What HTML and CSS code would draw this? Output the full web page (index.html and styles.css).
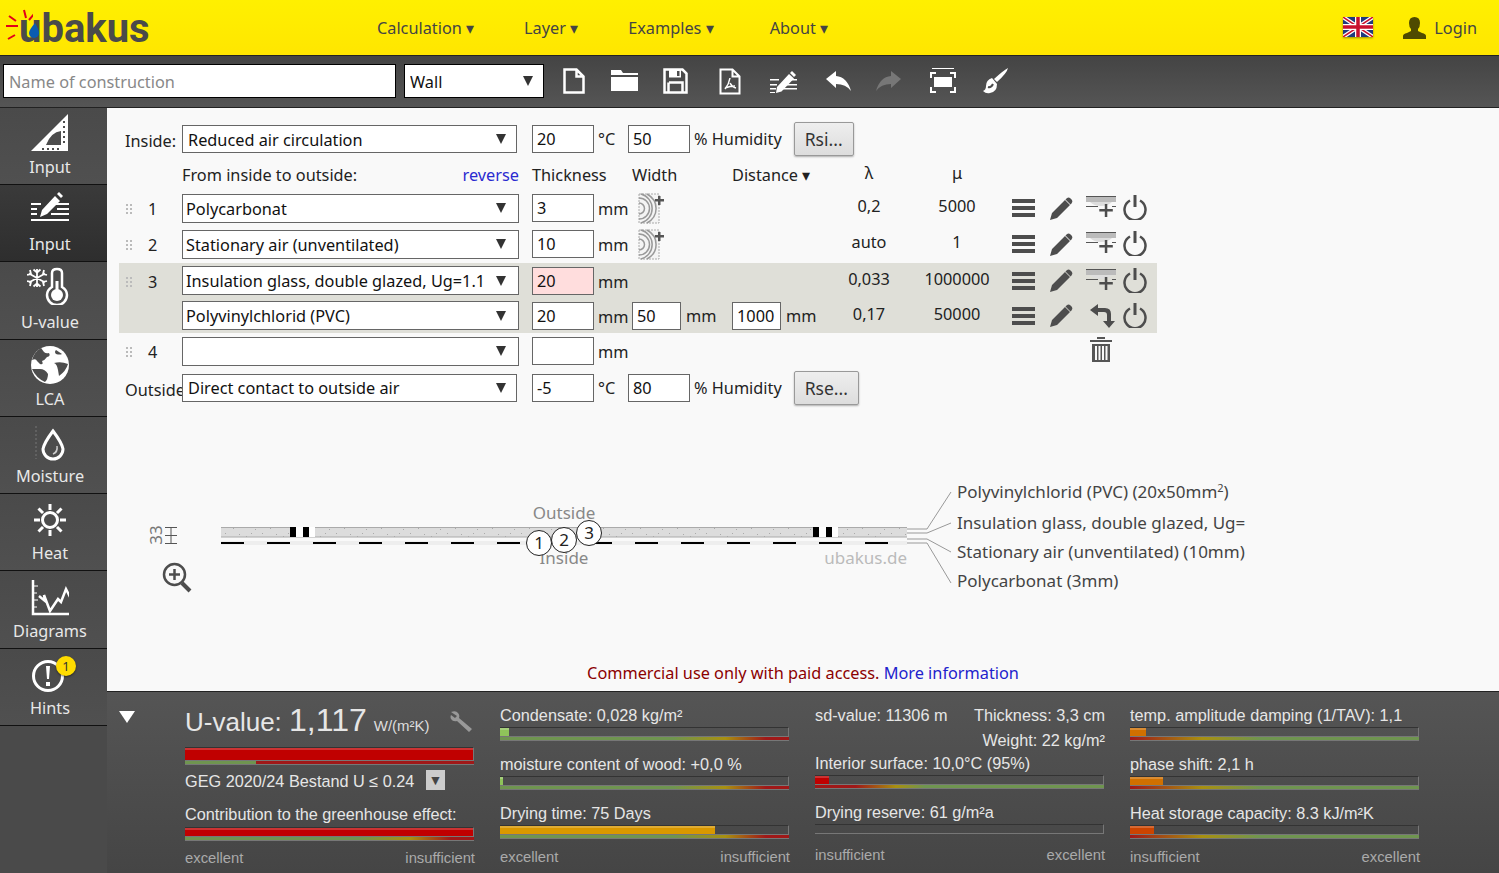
FILE: index.html
```html
<!DOCTYPE html>
<html lang="en">
<head>
    <meta charset="UTF-8">
    <meta name="viewport" content="width=device-width, initial-scale=1.0">
    <title>ubakus U-value calculator</title>
    <link rel="stylesheet" href="styles.css">
</head>
<body>
    <svg class="defs" width="0" height="0">
        <symbol id="i-menu" viewBox="0 0 23 20">
            <path d="M0 1h23v4H0zM0 8h23v4H0zM0 15h23v4H0z"/>
        </symbol>
        <symbol id="i-pencil" viewBox="0 0 23 23">
            <path d="M0 23l2-7L15 3l5 5L7 21zM16.500 1.500q2-1.500 3.500-.5l2 2q1 1.500-.5 3.500l-1 1-5-5z"/>
        </symbol>
        <symbol id="i-add" viewBox="0 0 30 24">
            <path d="M0 0h30v1H0z" fill="#555"/>
            <path d="M0 1h30v5H0z" fill="#bbb"/>
            <path d="M4 6h22q-4 4-11 4T4 6z" fill="#ddd"/>
            <path d="M0 10h12v1H0zM26 10h4v1h-4z" fill="#555"/>
            <path d="M18.800 8h2.500v5h5.500v2.500h-5.500V21h-2.500v-5.500h-5.500V13h5.500z"/>
        </symbol>
        <symbol id="i-power" viewBox="0 0 24 26">
            <path d="M7 6.500a10.500 10.500 0 1 0 10 0" fill="none" stroke="#4d4d4d" stroke-width="2.500"/>
            <path d="M10.500 1h3v12h-3z"/>
        </symbol>
        <symbol id="i-wood" viewBox="0 0 26 31">
            <path d="M1 1h20v29H1z" fill="#f4f4f4" stroke="#aaa" stroke-dasharray="2 1"/>
            <path d="M1 10a5.500 5.500 0 0 1 0 11M1 5a10.500 10.500 0 0 1 0 21M3 1a15 15 0 0 1 0 29M9 1a19 17 0 0 1 0 29" fill="none" stroke="#999" stroke-width="1.500"/>
            <path d="M20 3h2.500v3H26v2.500h-3.500V12H20V8.500h-3V6h3z" fill="#555"/>
        </symbol>
    </svg>

    <header class="topbar">
        <a class="logo">
            <svg class="logo-sun" width="28" height="36" viewBox="0 0 28 36">
                <path d="M19 1l2 8M29 5l-5 6M1 17h12M4 7l7 5M3 30l7-4" fill="none" stroke="#e2001a" stroke-width="2"/>
            </svg>
            <span class="logo-text">ubakus</span>
            <svg class="logo-drop" width="10" height="15" viewBox="0 0 10 15">
                <path d="M6 0q4 7 4 10a5 5 0 0 1-10 0q0-3 6-10z" fill="#0a5cb0"/>
            </svg>
        </a>
        <nav class="nav">
            <a>Calculation ▾</a>
            <a>Layer ▾</a>
            <a>Examples ▾</a>
            <a class="nav-about">About ▾</a>
        </nav>
        <div class="account">
            <svg class="flag" width="30" height="20" viewBox="0 0 30 20">
                <rect width="30" height="20" fill="#1f3a7d"/>
                <path d="M0 0l30 20M30 0L0 20" stroke="#fff" stroke-width="4"/>
                <path d="M0 0l30 20M30 0L0 20" stroke="#c8102e" stroke-width="1.500"/>
                <path d="M15 0v20M0 10h30" stroke="#fff" stroke-width="6"/>
                <path d="M15 0v20M0 10h30" stroke="#c8102e" stroke-width="3.500"/>
            </svg>
            <svg class="person" width="23" height="22" viewBox="0 0 23 22">
                <path d="M0 22v-3q0-2 4-3l4-2v-2q-2-2-2-6 0-6 5.500-6T17 6q0 4-2 6v2l4 2q4 1 4 3v3z" fill="#4f4a00"/>
            </svg>
            <a class="login">Login</a>
        </div>
    </header>

    <div class="toolbar">
        <input class="name-input" type="text" placeholder="Name of construction">
        <div class="sel sel-type">
            <select><option>Wall</option></select>
        </div>
        <div class="tools">
            <a class="tool"><svg width="22" height="26" viewBox="0 0 22 26"><path d="M1.500 1.500h12l7 7v16h-19zM13.500 1.500v7h7" fill="none" stroke="#fff" stroke-width="2.500"/></svg></a>
            <a class="tool"><svg width="27" height="22" viewBox="0 0 27 22"><path d="M0 0h10l2 3h15v2H0zM0 7h27v14H0z" fill="#fff"/></svg></a>
            <a class="tool"><svg width="25" height="26" viewBox="0 0 25 26"><path d="M1.500 1.500h18l4 4v19h-22zM6 14.500h13.500v10M5.500 24.500v-10" fill="none" stroke="#fff" stroke-width="2.500"/><path d="M6 1.500h12v8H6z" fill="#fff"/><path d="M14 3h2.500v5H14z" fill="#4d4d4d"/></svg></a>
            <a class="tool"><svg width="22" height="27" viewBox="0 0 22 27"><path d="M1.500 1.500h12l7 7v17h-19zM13.500 1.500v7h7" fill="none" stroke="#fff" stroke-width="2"/><path d="M11 10q-1 6-5 11M11 15q2 4 6 5M6 20q5-2 10-2" fill="none" stroke="#fff" stroke-width="1.500"/></svg></a>
            <a class="tool"><svg width="27" height="24" viewBox="0 0 27 24"><path d="M0 10h9v1.500H0zM18 10h9v1.500h-9zM0 15h7v1.500H0zM17 15h10v1.500H17zM0 19h6v1.500H0zM12 19h15v1.500H12zM0 23h5v1H0z" fill="#fff"/><path d="M6 24l1-6L19 5l5 4.500-12.500 13zM20 4l2-2 4 4-2 2z" fill="#fff"/></svg></a>
            <a class="tool"><svg width="25" height="20" viewBox="0 0 25 20"><path d="M0 8l10-8v5q11 1 15 15-5-7-15-7v4z" fill="#fff"/></svg></a>
            <a class="tool"><svg width="25" height="20" viewBox="0 0 25 20"><path d="M25 8L15 0v5Q4 6 0 20q5-7 15-7v4z" fill="#777"/></svg></a>
            <a class="tool"><svg width="26" height="26" viewBox="0 0 26 26"><path d="M2 0h22v1H2zM4 9h18v10H4z" fill="#fff"/><path d="M1 10V5h5M20 5h5v5M25 19v5h-5M6 24H1v-5" fill="none" stroke="#fff" stroke-width="2"/></svg></a>
            <a class="tool"><svg width="25" height="26" viewBox="0 0 25 26"><path d="M25 0q-1 5-11 14l-3-3Q21 2 25 0zM9 10l5 6q0 8-7 9-4 1-7-2 3-1 3-5 0-6 6-8z" fill="#fff"/><path d="M5 19q3 1 5-3" fill="none" stroke="#4d4d4d" stroke-width="2"/></svg></a>
        </div>
    </div>

    <div class="workspace">
        <aside class="sidebar">
            <a class="side-item">
                <svg width="40" height="40" viewBox="0 0 40 40"><path fill-rule="evenodd" d="M1 38L38 1v37zM16 32h15V18q-10 1-15 14z" fill="#fff"/><path d="M33 8h2v2h-2zM33 13h2v2h-2zM33 18h2v2h-2zM33 23h2v2h-2zM33 28h2v2h-2zM12 35h2v2h-2zM17 35h2v2h-2zM22 35h2v2h-2zM27 35h2v2h-2z" fill="#4d4d4d"/></svg>
                <span>Input</span>
            </a>
            <a class="side-item active">
                <svg width="40" height="32" viewBox="0 0 40 32"><path d="M1 13h10v2H1zM25 13h14v2H25zM1 18h6v2H1zM27 18h12v2H27zM1 23h6v2H1zM21 23h18v2H21zM1 29h38v2H1z" fill="#fff"/><path d="M10 27l2-7L25 6l5 5-13 13zM27 4l2-2 4 4-2 2z" fill="#fff"/></svg>
                <span>Input</span>
            </a>
            <a class="side-item">
                <svg width="46" height="38" viewBox="0 0 46 38"><path d="M10 2v18M2 6.500l16 9M18 6.500L2 15.500M6.500 2.500l3.500 3 3.500-3M6.500 19.500l3.500-3 3.500 3M3 3l1 4-4 1M17 3l-1 4 4 1M3 19l1-4-4-1M17 19l-1-4 4-1" fill="none" stroke="#fff" stroke-width="1.800"/><path d="M25 20V6q0-4 5-4t5 4v14q5 3 5 8a10 10 0 0 1-20 0q0-5 5-8z" fill="none" stroke="#fff" stroke-width="2.500"/><circle cx="30" cy="28" r="6" fill="#fff"/><path d="M28.500 14h3v12h-3z" fill="#fff"/></svg>
                <span>U-value</span>
            </a>
            <a class="side-item">
                <svg width="40" height="40" viewBox="0 0 40 40"><circle cx="20" cy="20" r="19" fill="#fff"/><path d="M11 3q-7 4-9 12 4-2 5 1l3 3q4 1 2-3 3-1 5-4 4-1 2-4-3 1-5-1zM2 24q4 9 13 13 3-3 3-8-3-5-8-5-4 0-8 0zM26 5q-2 2 0 4 4 1 6 0zM24 18q3 1 4 7l1 6q7-5 9-12-7-3-14-1z" fill="#4d4d4d"/></svg>
                <span>LCA</span>
            </a>
            <a class="side-item side-low">
                <svg width="30" height="36" viewBox="0 0 30 36"><path d="M1 0v33" stroke="#777" stroke-dasharray="2 2"/><path d="M18 5q-9 12-10 18a10 10 0 0 0 20 0q-1-6-10-18z" fill="none" stroke="#fff" stroke-width="3"/><path d="M22 20q1 6-4 8" fill="none" stroke="#ccc" stroke-width="1.500"/></svg>
                <span>Moisture</span>
            </a>
            <a class="side-item side-low">
                <svg width="34" height="34" viewBox="0 0 34 34"><circle cx="17" cy="17" r="7.500" fill="none" stroke="#fff" stroke-width="3"/><path d="M17 1v6M17 27v6M1 17h6M27 17h6M5.500 5.500l4.500 4.500M24 24l4.500 4.500M5.500 28.500L10 24M24 10l4.500-4.500" fill="none" stroke="#fff" stroke-width="3"/></svg>
                <span>Heat</span>
            </a>
            <a class="side-item side-low">
                <svg width="38" height="36" viewBox="0 0 38 36"><path d="M2 0v34h36" fill="none" stroke="#fff" stroke-width="2.500"/><path d="M3 6h4M3 13h3M3 20h4M3 27h3" stroke="#fff"/><path d="M8 16l6 5-1-6 6 16 8-12 3 3 5-13 4 8" fill="none" stroke="#fff" stroke-width="2.500"/></svg>
                <span>Diagrams</span>
            </a>
            <a class="side-item side-low side-hints">
                <svg width="34" height="34" viewBox="0 0 34 34"><circle cx="17" cy="17" r="14.500" fill="none" stroke="#fff" stroke-width="3"/><path d="M15 7h4l-1 13h-2zM15 23h4v4h-4z" fill="#fff"/></svg>
                <b class="badge">1</b>
                <span>Hints</span>
            </a>
        </aside>

        <div class="content">
            <main class="main">
                <form class="layers">
                    <div class="env-row">
                        <label class="env-label">Inside:</label>
                        <div class="sel sel-env"><select><option>Reduced air circulation</option></select></div>
                        <input class="num" type="text" value="20">
                        <span class="env-unit">°C</span>
                        <input class="num" type="text" value="50">
                        <span class="hum">% Humidity</span>
                        <button class="btn" type="button">Rsi...</button>
                    </div>
                    <div class="layer-head">
                        <span></span>
                        <span class="head-from">From inside to outside: <a class="reverse">reverse</a></span>
                        <span class="head-span">Thickness</span>
                        <span>Width</span>
                        <span>Distance ▾</span>
                        <span class="val">λ</span>
                        <span class="val">μ</span>
                    </div>

                    <div class="layer-row">
                        <span class="num-cell"><i class="grip"></i>1</span>
                        <div class="sel"><select><option>Polycarbonat</option></select></div>
                        <input class="num" type="text" value="3">
                        <span class="unit">mm</span>
                        <span><svg class="wood" width="26" height="31"><use href="#i-wood"/></svg></span>
                        <span></span>
                        <span class="val">0,2</span>
                        <span class="val">5000</span>
                        <div class="acts">
                            <svg width="23" height="20"><use href="#i-menu"/></svg>
                            <svg width="23" height="23"><use href="#i-pencil"/></svg>
                            <svg width="30" height="24" class="act-up"><use href="#i-add"/></svg>
                            <svg width="24" height="26"><use href="#i-power"/></svg>
                        </div>
                    </div>

                    <div class="layer-row">
                        <span class="num-cell"><i class="grip"></i>2</span>
                        <div class="sel"><select><option>Stationary air (unventilated)</option></select></div>
                        <input class="num" type="text" value="10">
                        <span class="unit">mm</span>
                        <span><svg class="wood" width="26" height="31"><use href="#i-wood"/></svg></span>
                        <span></span>
                        <span class="val">auto</span>
                        <span class="val">1</span>
                        <div class="acts">
                            <svg width="23" height="20"><use href="#i-menu"/></svg>
                            <svg width="23" height="23"><use href="#i-pencil"/></svg>
                            <svg width="30" height="24" class="act-up"><use href="#i-add"/></svg>
                            <svg width="24" height="26"><use href="#i-power"/></svg>
                        </div>
                    </div>

                    <div class="layer-row shaded shaded-first">
                        <span class="num-cell"><i class="grip"></i>3</span>
                        <div class="sel"><select><option>Insulation glass, double glazed, Ug=1.1</option></select></div>
                        <input class="num bad" type="text" value="20">
                        <span class="unit">mm</span>
                        <span></span>
                        <span></span>
                        <span class="val">0,033</span>
                        <span class="val">1000000</span>
                        <div class="acts">
                            <svg width="23" height="20"><use href="#i-menu"/></svg>
                            <svg width="23" height="23"><use href="#i-pencil"/></svg>
                            <svg width="30" height="24" class="act-up"><use href="#i-add"/></svg>
                            <svg width="24" height="26"><use href="#i-power"/></svg>
                        </div>
                    </div>

                    <div class="layer-row shaded">
                        <span class="num-cell"></span>
                        <div class="sel"><select><option>Polyvinylchlorid (PVC)</option></select></div>
                        <input class="num" type="text" value="20">
                        <span class="unit">mm</span>
                        <span class="dim"><input class="num num-sm" type="text" value="50"> mm</span>
                        <span class="dim"><input class="num num-sm" type="text" value="1000"> mm</span>
                        <span class="val">0,17</span>
                        <span class="val">50000</span>
                        <div class="acts">
                            <svg width="23" height="20"><use href="#i-menu"/></svg>
                            <svg width="23" height="23"><use href="#i-pencil"/></svg>
                            <svg width="30" height="24" viewBox="0 0 30 24"><path d="M4 6l8-6v4h7q6 0 6 6v7h4l-6 7-6-7h4v-6q0-3-3-3h-6v4z" fill="#4d4d4d"/></svg>
                            <svg width="24" height="26"><use href="#i-power"/></svg>
                        </div>
                    </div>

                    <div class="layer-row">
                        <span class="num-cell"><i class="grip"></i>4</span>
                        <div class="sel"><select><option></option></select></div>
                        <input class="num" type="text" value="">
                        <span class="unit">mm</span>
                        <span></span>
                        <span></span>
                        <span></span>
                        <span></span>
                        <div class="acts acts-del">
                            <svg width="22" height="25" viewBox="0 0 22 25"><path d="M0 3h22v2H0zM7 0h8v2H7zM2 7h18v18H2z" fill="#555"/><path d="M5 9h2v14H5zM8.500 9h2v14h-2zM12 9h2v14h-2zM15.500 9h2v14h-2z" fill="#f9f9f9"/></svg>
                        </div>
                    </div>

                    <div class="env-row">
                        <label class="env-label">Outside:</label>
                        <div class="sel sel-env"><select><option>Direct contact to outside air</option></select></div>
                        <input class="num" type="text" value="-5">
                        <span class="env-unit">°C</span>
                        <input class="num" type="text" value="80">
                        <span class="hum">% Humidity</span>
                        <button class="btn" type="button">Rse...</button>
                    </div>
                </form>

                <svg class="section" width="1392" height="130" viewBox="107 480 1392 130">
                    <defs>
                        <pattern id="speck" width="37" height="9" patternUnits="userSpaceOnUse">
                            <path d="M3 2h1v1H3zM11 6h1v1h-1zM17 3h1v1h-1zM24 5h1v1h-1zM29 2h1v1h-1zM33 7h1v1h-1z" fill="#aaa"/>
                        </pattern>
                        <clipPath id="label-clip"><rect x="950" y="480" width="296" height="130"/></clipPath>
                    </defs>
                    <rect x="221" y="527" width="686" height="10" fill="#dcdcdc"/>
                    <rect x="221" y="528" width="686" height="9" fill="url(#speck)"/>
                    <path d="M221 527.500h686M221 537h686" stroke="#aaa" fill="none"/>
                    <rect x="221" y="541" width="686" height="4" fill="#eee"/>
                    <path d="M221 543h680" stroke="#000" stroke-width="2" stroke-dasharray="23 23"/>
                    <path d="M290 527h6v10h-6zM303 527h6v10h-6zM813 527h6v10h-6zM826 527h6v10h-6z" fill="#000"/>
                    <path d="M296 527h7v10h-7zM309 527h6v10h-6zM819 527h7v10h-7zM832 527h6v10h-6z" fill="#fff"/>
                    <path d="M907 529h20L951 492M907 533h20L951 523M907 539h20L951 552M907 543h20L951 583" fill="none" stroke="#999"/>
                    <g class="sec-grey">
                        <text x="564" y="519" text-anchor="middle">Outside</text>
                        <text x="564" y="564" text-anchor="middle">Inside</text>
                    </g>
                    <text class="sec-mark" x="907" y="564" text-anchor="end">ubakus.de</text>
                    <g class="sec-ball">
                        <circle cx="539" cy="543" r="12.500"/><text x="539" y="548.500" text-anchor="middle">1</text>
                        <circle cx="564" cy="540" r="12.500"/><text x="564" y="545.500" text-anchor="middle">2</text>
                        <circle cx="589" cy="533" r="12.500"/><text x="589" y="538.500" text-anchor="middle">3</text>
                    </g>
                    <text class="sec-dim" transform="translate(162 535) rotate(-90)" text-anchor="middle">33</text>
                    <path d="M171 527v17M165 527.500h12M165 535.500h12M165 543.500h12" stroke="#555" fill="none"/>
                    <circle cx="174.500" cy="574.500" r="10.500" fill="none" stroke="#4d4d4d" stroke-width="2.500"/>
                    <path d="M182 583l8 8" stroke="#4d4d4d" stroke-width="4"/>
                    <path d="M169 574.500h11M174.500 569v11" stroke="#4d4d4d" stroke-width="2.500"/>
                    <g class="sec-labels" clip-path="url(#label-clip)">
                        <text x="957" y="498">Polyvinylchlorid (PVC) (20x50mm<tspan class="sup" dy="-6">2</tspan><tspan dy="6">)</tspan></text>
                        <text x="957" y="529">Insulation glass, double glazed, Ug=1.1</text>
                        <text x="957" y="558">Stationary air (unventilated) (10mm)</text>
                        <text x="957" y="587">Polycarbonat (3mm)</text>
                    </g>
                </svg>

                <p class="notice">Commercial use only with paid access. <a>More information</a></p>
            </main>

            <section class="results">
                <svg class="collapse" width="16" height="12" viewBox="0 0 16 12"><path d="M0 0h16l-8 12z" fill="#fff"/></svg>

                <div class="res-grid">
                    <div class="res-col">
                        <div class="uvalue">U-value: <b>1,117</b> <small>W/(m²K)</small>
                            <svg class="wrench" width="23" height="22" viewBox="0 0 23 22"><path d="M1 1q5-2 7 1 2 2 1 5l13 11-3 3L7 10Q3 11 1 8 0 6 1 4l4 3 2-2z" fill="#999"/></svg>
                        </div>
                        <div class="bar bar-tall"><div class="fill fill-red" style="width:100%"></div></div>
                        <div class="scale scale-u"></div>
                        <div class="geg">GEG 2020/24 Bestand U ≤ 0.24 <span class="geg-btn">▼</span></div>
                        <div class="label label-gh">Contribution to the greenhouse effect:</div>
                        <div class="bar"><div class="fill fill-red" style="width:100%"></div></div>
                        <div class="scale scale-bad"></div>
                        <div class="legend legend-u"><span>excellent</span><span>insufficient</span></div>
                    </div>

                    <div class="res-col">
                        <div class="metric">
                            <div class="label">Condensate: 0,028 kg/m²</div>
                            <div class="bar"><div class="fill fill-green" style="width:3%"></div></div>
                            <div class="scale scale-bad"></div>
                        </div>
                        <div class="metric">
                            <div class="label">moisture content of wood: +0,0 %</div>
                            <div class="bar"><div class="fill fill-green" style="width:1%"></div></div>
                            <div class="scale scale-bad"></div>
                        </div>
                        <div class="metric metric-last">
                            <div class="label">Drying time: 75 Days</div>
                            <div class="bar"><div class="fill fill-amber" style="width:74.500%"></div></div>
                            <div class="scale scale-bad"></div>
                        </div>
                        <div class="legend"><span>excellent</span><span>insufficient</span></div>
                    </div>

                    <div class="res-col">
                        <div class="facts">
                            <span>sd-value: 11306 m</span><span>Thickness: 3,3 cm</span>
                            <span></span><span>Weight: 22 kg/m²</span>
                        </div>
                        <div class="metric">
                            <div class="label">Interior surface: 10,0°C (95%)</div>
                            <div class="bar"><div class="fill fill-red" style="width:5%"></div></div>
                            <div class="scale scale-good-early"></div>
                        </div>
                        <div class="metric metric-last">
                            <div class="label">Drying reserve: 61 g/m²a</div>
                            <div class="bar"></div>
                            <div class="scale scale-none"></div>
                        </div>
                        <div class="legend"><span>insufficient</span><span>excellent</span></div>
                    </div>

                    <div class="res-col">
                        <div class="metric">
                            <div class="label">temp. amplitude damping (1/TAV): 1,1</div>
                            <div class="bar"><div class="fill fill-orange" style="width:5.500%"></div></div>
                            <div class="scale scale-good"></div>
                        </div>
                        <div class="metric">
                            <div class="label">phase shift: 2,1 h</div>
                            <div class="bar"><div class="fill fill-orange" style="width:11.500%"></div></div>
                            <div class="scale scale-good"></div>
                        </div>
                        <div class="metric metric-last">
                            <div class="label">Heat storage capacity: 8.3 kJ/m²K</div>
                            <div class="bar"><div class="fill fill-rust" style="width:8.500%"></div></div>
                            <div class="scale scale-good"></div>
                        </div>
                        <div class="legend"><span>insufficient</span><span>excellent</span></div>
                    </div>
                </div>
            </section>
        </div>
    </div>
</body>
</html>
```

FILE: styles.css
```css
* {
    box-sizing: border-box;
}

html, body {
    height: 100%;
}

body {
    margin: 0;
    display: flex;
    flex-direction: column;
    overflow: hidden;
    font-family: "Noto Sans", sans-serif;
    font-size: 16.3px;
    color: #222;
    background: #4d4d4d;
}

.defs {
    position: absolute;
}

/* top bar */
.topbar {
    height: 56px;
    flex: none;
    display: flex;
    align-items: center;
    background: linear-gradient(#fff000, #ffe600);
    border-bottom: 1px solid #222;
    color: #444;
}

.logo {
    position: relative;
    width: 377px;
    height: 55px;
    flex: none;
}

.logo-sun {
    position: absolute;
    left: 5px;
    top: 9px;
}

.logo-text {
    position: absolute;
    left: 19px;
    top: 4px;
    font-family: Roboto, sans-serif;
    font-weight: bold;
    font-size: 40px;
    line-height: 50px;
    color: #4a4a4a;
}

.logo-drop {
    position: absolute;
    left: 29px;
    top: 23px;
}

.nav {
    display: flex;
    gap: 50px;
}

.nav-about {
    margin-left: 6px;
}

.account {
    margin-left: auto;
    display: flex;
    align-items: center;
    padding-right: 22px;
}

.flag {
    margin-right: 30px;
    margin-bottom: 1px;
    box-shadow: 0 1px 2px rgba(0, 0, 0, 0.4);
}

.login {
    margin-left: 8px;
}

/* toolbar */
.toolbar {
    height: 52px;
    flex: none;
    display: flex;
    align-items: center;
    padding: 0 3px 1px;
    background: linear-gradient(#444, #555);
    border-bottom: 1px solid #222;
}

.name-input {
    width: 393px;
    height: 34px;
    border: 1px solid #000;
    padding: 2px 5px 0;
    font: inherit;
    background: #fff;
}

.name-input::placeholder {
    color: #888;
}

.sel {
    position: relative;
    width: 337px;
    height: 29px;
}

.sel select {
    width: 100%;
    height: 100%;
    appearance: none;
    border: 1px solid #666;
    border-radius: 0;
    padding: 2px 30px 0 3px;
    font: inherit;
    color: #111;
    background: #fff;
}

.sel::after {
    content: "";
    position: absolute;
    right: 13px;
    top: 50%;
    margin-top: -5px;
    border-left: 5.500px solid transparent;
    border-right: 5.500px solid transparent;
    border-top: 10px solid #333;
    pointer-events: none;
}

.sel-type {
    width: 140px;
    height: 34px;
    margin-left: 8px;
}

.sel-type::after,
.sel-env::after {
    right: 11px;
}

.sel-type select {
    border-color: #000;
    padding-left: 5px;
}

.tools {
    display: flex;
    align-items: center;
    margin-left: 19px;
}

.tool {
    display: flex;
}

.tool:nth-child(2) { margin-left: 26px; }
.tool:nth-child(3) { margin-left: 25px; }
.tool:nth-child(4) { margin-left: 31px; }
.tool:nth-child(5) { margin-left: 29px; }
.tool:nth-child(6) { margin-left: 29px; }
.tool:nth-child(7) { margin-left: 25px; }
.tool:nth-child(8) { margin-left: 29px; }
.tool:nth-child(9) { margin-left: 27px; }

/* sidebar */
.workspace {
    flex: 1;
    min-height: 0;
    display: flex;
}

.sidebar {
    width: 107px;
    flex: none;
    background: #4a4a4a;
}

.side-item {
    position: relative;
    height: 77.240px;
    display: flex;
    flex-direction: column;
    align-items: center;
    justify-content: space-between;
    padding: 5px 7px 6px 0;
    color: #e8e8e8;
    border-bottom: 1px solid #111;
    background: linear-gradient(#4a4a4a, #505050);
}

.side-item.active {
    background: linear-gradient(#3a3a3a, #2e2e2e);
}

.side-low {
    padding-top: 9px;
}

.side-hints {
    padding-top: 10px;
}

.badge {
    position: absolute;
    left: 56px;
    top: 7px;
    width: 20px;
    height: 20px;
    border-radius: 50%;
    background: #ffdc00;
    color: #333;
    font-size: 13px;
    font-weight: normal;
    line-height: 20px;
    text-align: center;
    box-shadow: 0 1px 2px rgba(0, 0, 0, 0.5);
}

.side-hints svg {
    margin-right: 4px;
}

/* main area */
.content {
    flex: 1;
    min-width: 0;
    display: flex;
    flex-direction: column;
}

.main {
    flex: 1;
    min-height: 0;
    display: flex;
    flex-direction: column;
    background: #f9f9f9;
    padding: 13px 0 0;
}

.layers {
    width: 1038px;
    margin-left: 12px;
}

.env-row {
    height: 36px;
    display: flex;
    align-items: center;
}

.env-row:last-child {
    margin-top: 1px;
}

.env-row:last-child select,
.shaded select {
    padding-top: 0;
}

.env-label {
    width: 63px;
    flex: none;
    padding: 3px 0 0 6px;
    overflow: hidden;
    white-space: nowrap;
}

.sel-env {
    width: 335px;
    height: 28px;
    margin-right: 15px;
}

.sel-env select {
    padding-left: 5px;
}

.num {
    width: 62px;
    height: 28px;
    flex: none;
    border: 1px solid #666;
    padding: 0 4px;
    font: inherit;
    color: #111;
    background: #fff;
}

.num.bad {
    background: #fdd;
}

.num-sm {
    width: 49px;
}

.env-unit {
    width: 34px;
    padding-left: 4px;
}

.hum {
    margin-left: 4px;
}

.btn {
    height: 34px;
    margin-left: 12px;
    padding: 0 10px;
    border: 1px solid #999;
    border-radius: 2px;
    font: inherit;
    font-size: 17.500px;
    color: #333;
    background: linear-gradient(#eee, #ddd);
    box-shadow: 0 1px 2px rgba(0, 0, 0, 0.3);
}

.layer-head {
    display: grid;
    grid-template-columns: 63px 350px 100px 100px 100px 74px 102px 149px;
    align-items: center;
    height: 33px;
    padding-top: 2px;
}

.head-from {
    display: flex;
    justify-content: space-between;
    padding-right: 13px;
}

.reverse {
    color: #2a2ad0;
}

.layer-row {
    display: grid;
    grid-template-columns: 63px 350px 62px 38px 100px 100px 74px 102px 149px;
    align-items: center;
    height: 36px;
}

.shaded {
    height: 35px;
    background: #dfdfd8;
}

.shaded-first {
    margin-top: 1px;
}

.num-cell {
    position: relative;
    padding-left: 29px;
    padding-top: 2px;
}

.grip {
    position: absolute;
    left: 6px;
    top: 7px;
    width: 8px;
    height: 12px;
    background: radial-gradient(circle, #bbb 1.500px, transparent 1.500px) 0 0 / 4px 4px;
}

.unit {
    padding-left: 4px;
    padding-top: 2px;
}

.wood {
    display: block;
    margin-left: 6px;
}

.dim {
    display: flex;
    align-items: center;
    gap: 5px;
}

.val {
    text-align: center;
    padding-bottom: 4px;
}

.acts {
    display: flex;
    align-items: center;
    padding-left: 4px;
    gap: 13px;
    fill: #4d4d4d;
}

.acts svg:nth-child(1) {
    margin-right: 2px;
}

.acts svg:nth-child(3) {
    margin-right: -6px;
}

.acts svg:nth-child(4) {
    margin-bottom: 2px;
}

.acts-del {
    padding-left: 82px;
    padding-bottom: 4px;
}

.section {
    display: block;
    margin-top: 74px;
    flex: none;
    font-size: 17px;
}

.sec-grey text {
    fill: #888;
}

.sec-mark {
    fill: #bbb;
}

.sec-ball circle {
    fill: #fff;
    stroke: #222;
}

.sec-ball text {
    fill: #222;
}

.sec-dim {
    fill: #777;
}

.sec-labels text {
    fill: #444;
}

.sup {
    font-size: 11px;
}

.notice {
    margin: 52px 0 0;
    text-align: center;
    color: #8b0000;
}

.notice a {
    color: #2222cc;
}

/* results panel */
.results {
    height: 182px;
    flex: none;
    display: flex;
    padding: 13px 0 0 12px;
    background: linear-gradient(#555, #454545);
    border-top: 1px solid #222;
    color: #e6e6e6;
    font-family: "Liberation Sans", Arial, sans-serif;
    font-size: 16.250px;
}

.collapse {
    flex: none;
    margin: 6px 0 0;
}

.res-grid {
    display: grid;
    grid-template-columns: repeat(4, 290px);
    gap: 25px;
    margin-left: 50px;
}

.label {
    height: 20px;
    line-height: 20px;
    margin-bottom: 2px;
    white-space: nowrap;
}

.label-gh {
    margin-bottom: 3px;
}

.bar {
    height: 10px;
    width: 289px;
    border-top: 1px solid #333;
    border-bottom: 1px solid #777;
    border-right: 1px solid #777;
}

.bar-tall {
    height: 14px;
}

.fill {
    height: 100%;
    box-shadow: inset 0 2px 0 rgba(255, 255, 255, 0.2);
}

.fill-red {
    background: #c00000;
}

.fill-green {
    background: #8fc45a;
}

.fill-amber {
    background: #d99800;
}

.fill-orange {
    background: #d07000;
}

.fill-rust {
    background: #cc4400;
}

.scale {
    height: 4px;
    width: 289px;
    border-bottom: 1px solid #777;
}

.scale-bad {
    background: linear-gradient(90deg, #6f9550 0, #6f9550 60%, #a89010 78%, #a01818 92%);
}

.scale-u {
    background: linear-gradient(90deg, #6f9550 0, #6f9550 24.500%, #a01818 24.500%);
}

.scale-good {
    background: linear-gradient(90deg, #a01818 0, #a89010 25%, #6f9550 45%);
}

.scale-good-early {
    background: linear-gradient(90deg, #a01818 0, #a01818 14%, #a89010 28%, #6f9550 38%);
}

.scale-none {
    height: 3px;
    border-bottom: 0;
}

.metric {
    margin-bottom: 13px;
}

.metric-last {
    margin-bottom: 8px;
}

.legend {
    display: flex;
    justify-content: space-between;
    height: 20px;
    line-height: 20px;
    font-size: 14.800px;
    color: #aaa;
}

.uvalue {
    height: 43px;
    margin-top: -1px;
    display: flex;
    align-items: baseline;
    white-space: pre;
    font-size: 26px;
    line-height: 32px;
}

.uvalue b {
    font-weight: normal;
    font-size: 32px;
}

.uvalue small {
    font-size: 15px;
    color: #ddd;
    margin-left: 7px;
}

.wrench {
    align-self: center;
    margin: -8px 0 0 20px;
}

.geg {
    height: 23px;
    line-height: 23px;
    margin-top: 5px;
    margin-bottom: 11px;
    display: flex;
    white-space: pre;
}

.geg-btn {
    width: 19px;
    height: 20px;
    margin-left: 7px;
    line-height: 20px;
    text-align: center;
    font-size: 14px;
    color: #444;
    background: #ccc;
}

.legend-u {
    margin-top: 7px;
}

.facts {
    display: grid;
    grid-template-columns: 1fr auto;
    justify-items: end;
    line-height: 23px;
    height: 49px;
    margin-top: -1px;
}

.facts span:nth-child(odd) {
    justify-self: start;
}
```
